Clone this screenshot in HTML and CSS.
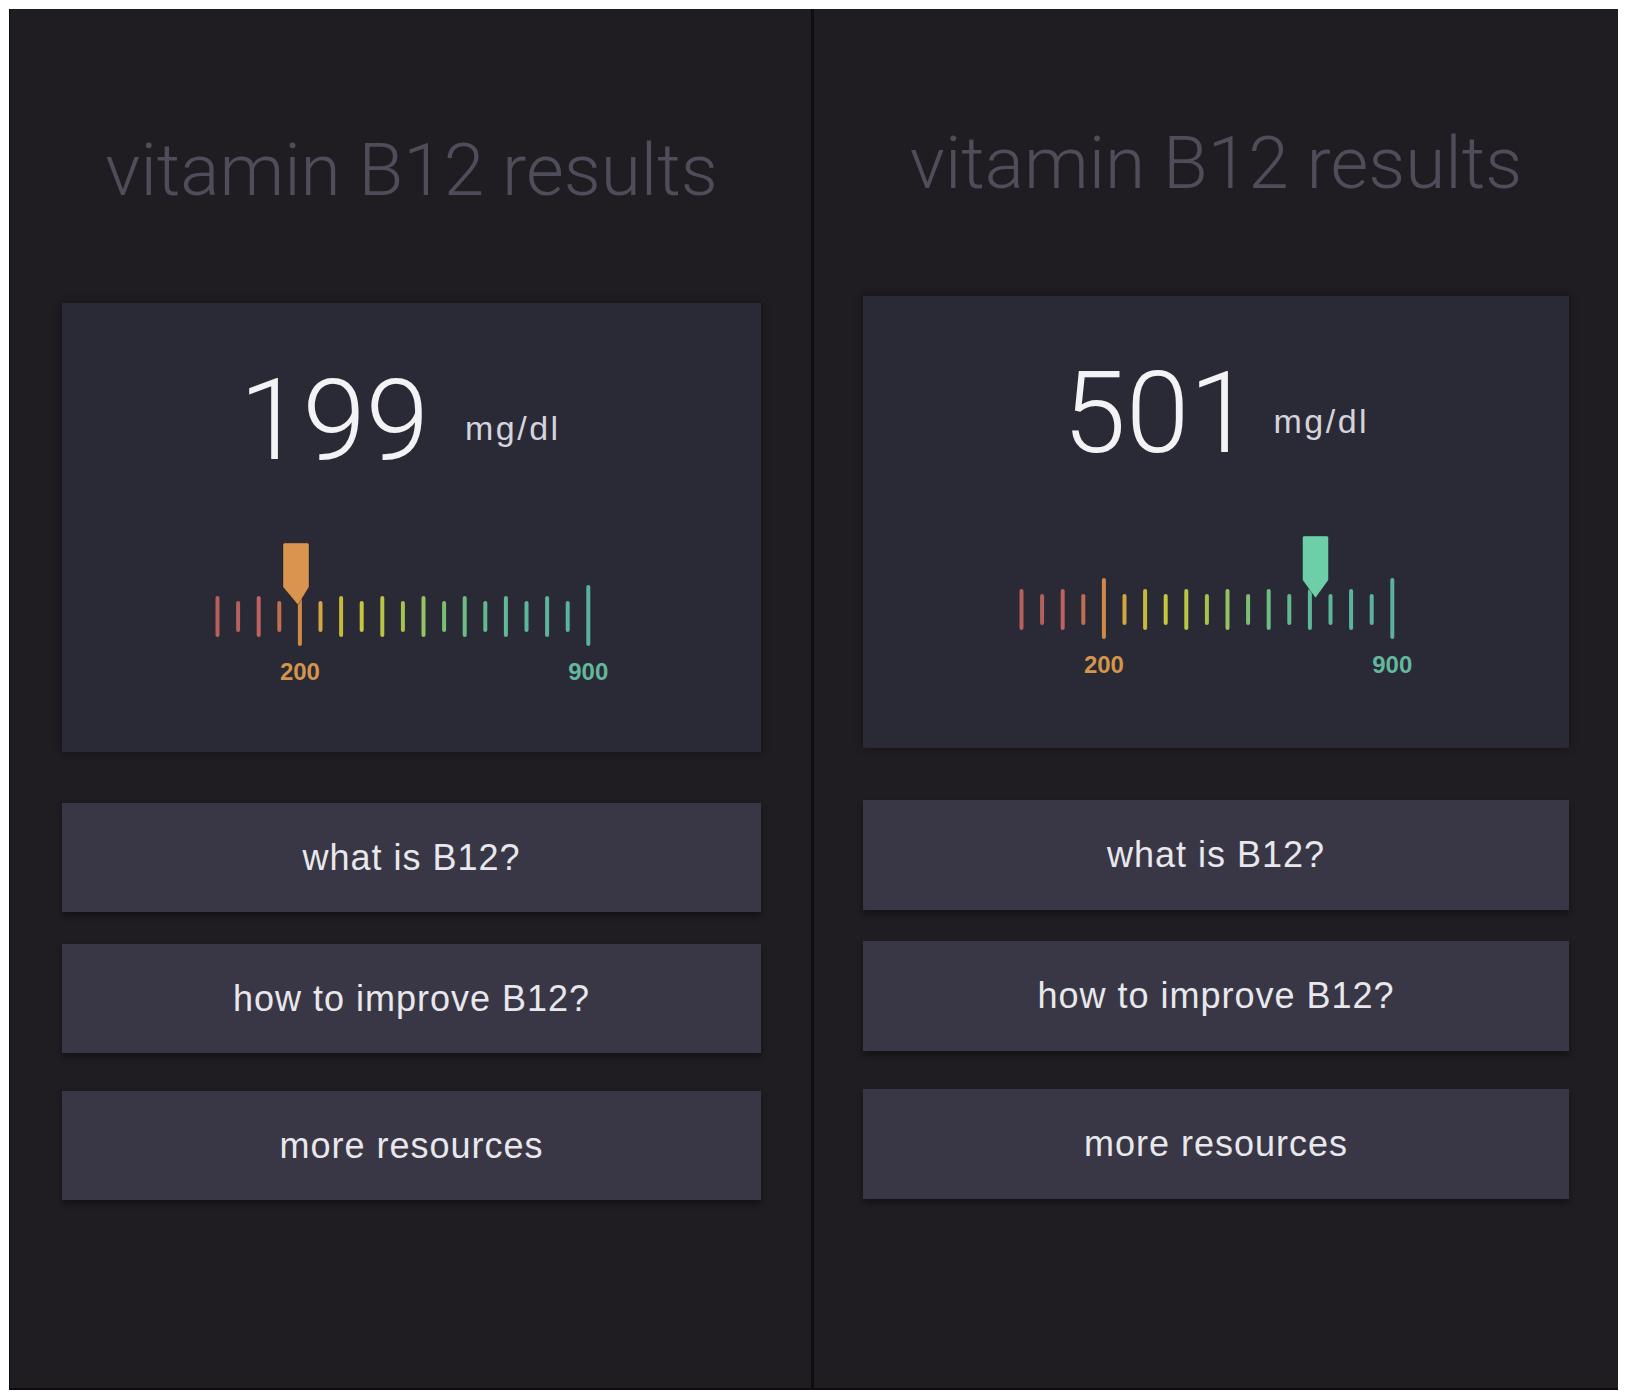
FILE: index.html
```html
<!DOCTYPE html>
<html lang="en">
<head>
<meta charset="utf-8">
<title>vitamin B12 results</title>
<link rel="stylesheet" href="styles.css">
</head>
<body>
<div class="frame">
  <section class="panel panel-a">
    <h1 class="title">vitamin B12 results</h1>
    <div class="card">
      <div class="reading"><span class="num">199</span><span class="unit">mg/dl</span></div>
      <svg class="gauge" width="420" height="142" viewBox="0 0 420 142">
        <g stroke-width="4" stroke-linecap="round">
          <line x1="15.5" y1="55" x2="15.5" y2="92" stroke="#b65f5b"/>
          <line x1="36.1" y1="60" x2="36.1" y2="87" stroke="#b4605c"/>
          <line x1="56.7" y1="55" x2="56.7" y2="92" stroke="#c0625f"/>
          <line x1="77.3" y1="60" x2="77.3" y2="87" stroke="#c07050"/>
          <line x1="97.9" y1="44" x2="97.9" y2="101" stroke="#d08a48"/>
          <line x1="118.5" y1="60" x2="118.5" y2="87" stroke="#d4a640"/>
          <line x1="139.1" y1="55" x2="139.1" y2="92" stroke="#c9b93a"/>
          <line x1="159.7" y1="60" x2="159.7" y2="87" stroke="#c6c63c"/>
          <line x1="180.3" y1="55" x2="180.3" y2="92" stroke="#b8c644"/>
          <line x1="200.9" y1="60" x2="200.9" y2="87" stroke="#a8c24e"/>
          <line x1="221.5" y1="55" x2="221.5" y2="92" stroke="#94c462"/>
          <line x1="242.1" y1="60" x2="242.1" y2="87" stroke="#7cbf72"/>
          <line x1="262.7" y1="55" x2="262.7" y2="92" stroke="#6cbd84"/>
          <line x1="283.3" y1="60" x2="283.3" y2="87" stroke="#63b98f"/>
          <line x1="303.9" y1="55" x2="303.9" y2="92" stroke="#5fb896"/>
          <line x1="324.5" y1="60" x2="324.5" y2="87" stroke="#5db69a"/>
          <line x1="345.1" y1="55" x2="345.1" y2="92" stroke="#5cb49c"/>
          <line x1="365.7" y1="60" x2="365.7" y2="87" stroke="#5bb39d"/>
          <line x1="386.3" y1="44" x2="386.3" y2="101" stroke="#5ab29e"/>
        </g>
        <path d="M81 1.5 Q81 0 82.5 0 L105.5 0 Q107 0 107 1.5 L107 44 L96 62 L81 44 Z" fill="#d9944f" stroke="rgba(0,0,0,0.3)" stroke-width="1"/>
        <text class="lbl" x="97.9" y="137" fill="#d3944c">200</text>
        <text class="lbl" x="386.3" y="137" fill="#62b79d">900</text>
      </svg>
    </div>
    <div class="btn first">what is B12?</div>
    <div class="btn second">how to improve B12?</div>
    <div class="btn third">more resources</div>
  </section>
  <div class="divider"></div>
  <section class="panel panel-b">
    <h1 class="title">vitamin B12 results</h1>
    <div class="card">
      <div class="reading"><span class="num">501</span><span class="unit">mg/dl</span></div>
      <svg class="gauge" width="420" height="142" viewBox="0 0 420 142">
        <g stroke-width="4" stroke-linecap="round">
          <line x1="15.5" y1="55" x2="15.5" y2="92" stroke="#b65f5b"/>
          <line x1="36.1" y1="60" x2="36.1" y2="87" stroke="#b4605c"/>
          <line x1="56.7" y1="55" x2="56.7" y2="92" stroke="#c0625f"/>
          <line x1="77.3" y1="60" x2="77.3" y2="87" stroke="#c07050"/>
          <line x1="97.9" y1="44" x2="97.9" y2="101" stroke="#d08a48"/>
          <line x1="118.5" y1="60" x2="118.5" y2="87" stroke="#d4a640"/>
          <line x1="139.1" y1="55" x2="139.1" y2="92" stroke="#c9b93a"/>
          <line x1="159.7" y1="60" x2="159.7" y2="87" stroke="#c6c63c"/>
          <line x1="180.3" y1="55" x2="180.3" y2="92" stroke="#b8c644"/>
          <line x1="200.9" y1="60" x2="200.9" y2="87" stroke="#a8c24e"/>
          <line x1="221.5" y1="55" x2="221.5" y2="92" stroke="#94c462"/>
          <line x1="242.1" y1="60" x2="242.1" y2="87" stroke="#7cbf72"/>
          <line x1="262.7" y1="55" x2="262.7" y2="92" stroke="#6cbd84"/>
          <line x1="283.3" y1="60" x2="283.3" y2="87" stroke="#63b98f"/>
          <line x1="303.9" y1="55" x2="303.9" y2="92" stroke="#5fb896"/>
          <line x1="324.5" y1="60" x2="324.5" y2="87" stroke="#5db69a"/>
          <line x1="345.1" y1="55" x2="345.1" y2="92" stroke="#5cb49c"/>
          <line x1="365.7" y1="60" x2="365.7" y2="87" stroke="#5bb39d"/>
          <line x1="386.3" y1="44" x2="386.3" y2="101" stroke="#5ab29e"/>
        </g>
        <path d="M296.5 1.5 Q296.5 0 298 0 L321 0 Q322.5 0 322.5 1.5 L322.5 44 L309.5 62 L296.5 44 Z" fill="#6dcfa7" stroke="rgba(0,0,0,0.3)" stroke-width="1"/>
        <text class="lbl" x="97.9" y="137" fill="#d3944c">200</text>
        <text class="lbl" x="386.3" y="137" fill="#62b79d">900</text>
      </svg>
    </div>
    <div class="btn first">what is B12?</div>
    <div class="btn second">how to improve B12?</div>
    <div class="btn third">more resources</div>
  </section>
</div>
</body>
</html>
```
FILE: styles.css
```css
html, body {
  margin: 0;
  padding: 0;
  background: #ffffff;
}

.frame {
  margin: 9px 0 0 9px;
  width: 1609px;
  height: 1381px;
  box-sizing: border-box;
  display: flex;
  background: #1f1c22;
  border-left: 1px solid #0c0b0e;
  border-bottom: 2px solid #0c0b0e;
}

.panel {
  display: flex;
  flex-direction: column;
}

.panel-a {
  width: 801px;
  padding: 0 50px 0 52px;
  box-sizing: border-box;
}

.panel-b {
  flex: 1;
  padding: 0 49px;
}

.divider {
  width: 3px;
  background: #0e0d10;
}

.title {
  margin: 125px 0 0;
  font-family: Roboto, "Liberation Sans", sans-serif;
  font-weight: 300;
  font-size: 73px;
  line-height: 1;
  color: #504d5b;
  text-align: center;
}

.panel-b .title {
  margin-top: 118px;
}

.card {
  margin-top: 96px;
  height: 449px;
  box-sizing: border-box;
  padding-top: 60px;
  background: #2a2936;
  box-shadow: 0 0 8px rgba(0, 0, 0, 0.35);
  display: flex;
  flex-direction: column;
  align-items: center;
}

.panel-b .card {
  height: 452px;
}

.reading {
  font-family: Roboto, "Liberation Sans", sans-serif;
  font-weight: 300;
  font-size: 114px;
  line-height: 1;
  color: #f3f3f5;
  white-space: nowrap;
}

.panel-a .reading {
  margin-right: 23px;
}

.unit {
  margin-left: 36px;
  font-family: "Liberation Sans", Arial, sans-serif;
  font-weight: 400;
  font-size: 34px;
  line-height: 1;
  letter-spacing: 2.5px;
  color: #d4d4da;
  vertical-align: 19px;
}

.panel-b .unit {
  margin-left: 21px;
}

.gauge {
  display: block;
  margin-top: 66px;
}

.lbl {
  font-family: "Liberation Sans", Arial, sans-serif;
  font-size: 24px;
  font-weight: 700;
  text-anchor: middle;
}

.btn {
  height: 109px;
  display: flex;
  align-items: center;
  justify-content: center;
  background: #393746;
  box-shadow: 0 4px 6px rgba(0, 0, 0, 0.35);
  font-family: "Liberation Sans", Arial, sans-serif;
  font-size: 36px;
  letter-spacing: 1px;
  color: #e8e8ec;
}

.btn.first {
  margin-top: 51px;
}

.btn.second {
  margin-top: 32px;
}

.btn.third {
  margin-top: 38px;
}

.panel-b .btn {
  height: 110px;
}

.panel-b .btn.first {
  margin-top: 52px;
}

.panel-b .btn.second {
  margin-top: 31px;
}
```
